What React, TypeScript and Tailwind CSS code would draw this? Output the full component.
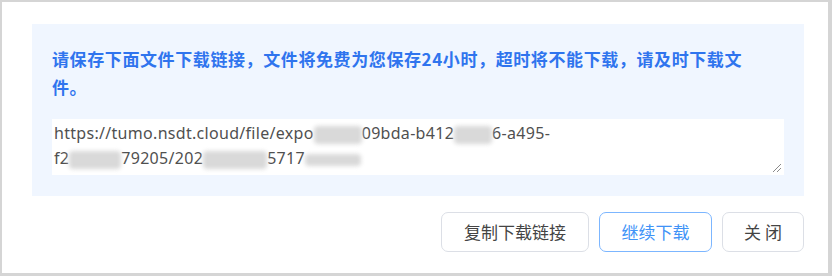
import React from "react";

const Blur = ({ w, h = 18 }: { w: number; h?: number }) => (
  <span
    className="inline-block align-middle bg-[#d9d9d9] blur-[2px] rounded-[4px]"
    style={{ width: w, height: h }}
  />
);

export default function App() {
  return (
    <div className="w-[832px] h-[276px] bg-[#d5d5d5] pt-[2px] pl-[2px] pr-[4px] pb-[3px] font-['Noto_Sans','Noto_Sans_CJK_SC',sans-serif]">
      <div className="h-full bg-white pl-[30px] pr-[24px] pt-[22px]">
        <div className="bg-[#f0f6ff] px-[20px] pt-[21px] pb-[21px]">
          <p className="text-[17px] leading-[28px] font-bold text-[#2f74ee] tracking-[0.6px] pr-[24px] font-['Noto_Sans_CJK_SC',sans-serif]">
            请保存下面文件下载链接，文件将免费为您保存24小时，超时将不能下载，请及时下载文件。
          </p>
          <div className="relative mt-[18px] h-[56px] bg-white pl-[2px] pt-[2px] text-[16px] leading-[25px] tracking-[0.3px] text-[#505050] whitespace-nowrap">
            <div>
              https://tumo.nsdt.cloud/file/expo
              <Blur w={48} />
              09bda-b412
              <Blur w={38} />
              6-a495-
            </div>
            <div>
              f2
              <Blur w={52} />
              79205/202
              <Blur w={64} />
              5717
              <Blur w={56} h={12} />
            </div>
            <svg
              className="absolute right-[2px] bottom-[2px]"
              width="10"
              height="10"
              viewBox="0 0 10 10"
            >
              <path d="M9 1 L1 9 M9 5 L5 9" stroke="#8a8a8a" strokeWidth="1" fill="none" />
            </svg>
          </div>
        </div>
        <div className="flex justify-end gap-[10px] mt-[16px] font-['Noto_Sans_CJK_SC',sans-serif]">
          <button className="h-[40px] w-[148px] rounded-[7px] border border-[#dcdfe6] bg-white text-[17px] text-[#444]">
            复制下载链接
          </button>
          <button className="h-[40px] w-[113px] rounded-[7px] border border-[#7cb6ff] bg-white text-[17px] text-[#4093f7]">
            继续下载
          </button>
          <button className="h-[40px] w-[82px] rounded-[7px] border border-[#dcdfe6] bg-white text-[17px] text-[#444]">
            关 闭
          </button>
        </div>
      </div>
    </div>
  );
}
